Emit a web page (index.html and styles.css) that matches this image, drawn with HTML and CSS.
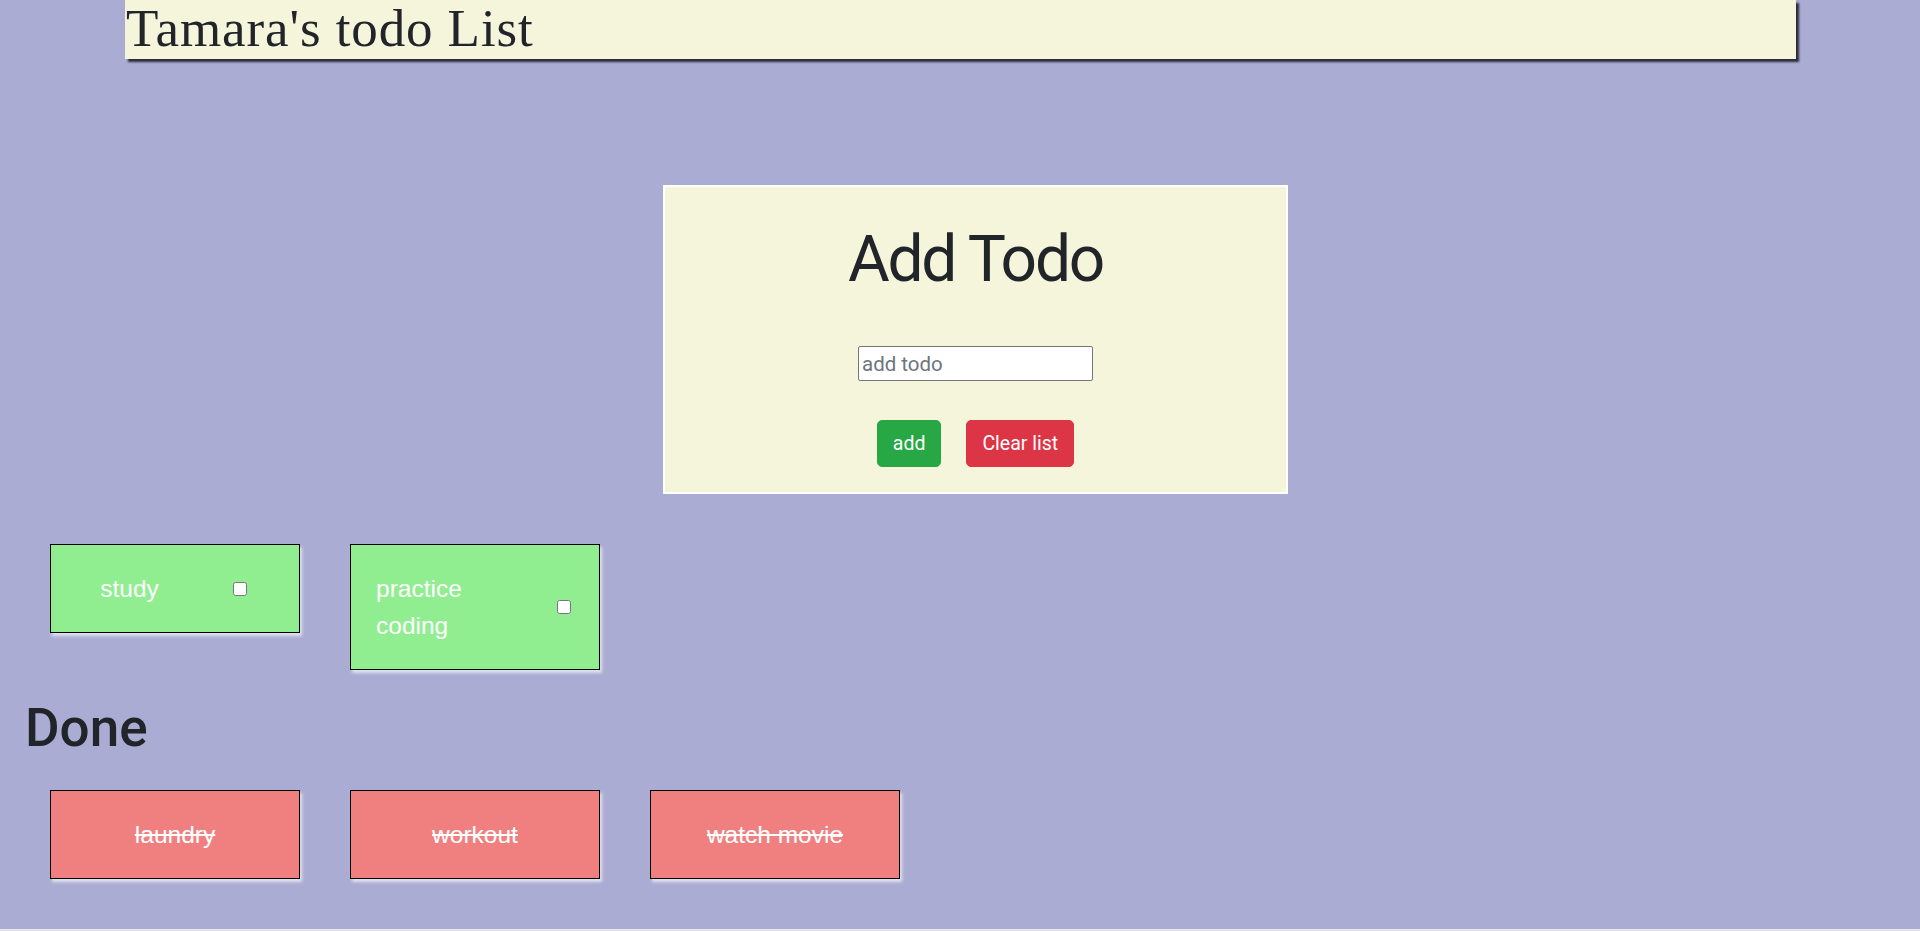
FILE: index.html
```html
<!DOCTYPE html>
<html>
<head>
<meta charset="utf-8">
<title>Tamara's todo List</title>
<link rel="stylesheet" href="styles.css">
</head>
<body>
<header class="title-bar"><h1 class="title">Tamara's todo List</h1></header>

<section class="add-panel">
  <h2 class="add-heading">Add Todo</h2>
  <input class="todo-input" type="text" placeholder="add todo">
  <div class="actions">
    <button class="btn btn-add">add</button>
    <button class="btn btn-clear">Clear list</button>
  </div>
</section>

<section class="todo-row">
  <div class="card card-open"><p class="card-text">study</p><input type="checkbox" class="check"></div>
  <div class="card card-open"><p class="card-text">practice coding</p><input type="checkbox" class="check"></div>
</section>

<h2 class="done-heading">Done</h2>

<section class="todo-row done-row">
  <div class="card card-done"><p class="card-text">laundry</p></div>
  <div class="card card-done"><p class="card-text">workout</p></div>
  <div class="card card-done"><p class="card-text">watch movie</p></div>
</section>
</body>
</html>
```

FILE: styles.css
```css
html {
  background: #e4e4e8;
}

body {
  margin: 0;
  height: 929px;
  background: #abacd3;
  color: #212529;
  font-family: Roboto, "Liberation Sans", sans-serif;
}

.title-bar {
  box-sizing: border-box;
  width: 1671px;
  height: 59px;
  margin-left: 125px;
  padding-left: 1px;
  background: #f5f5dc;
  box-shadow: 3px 3px 2px rgba(20, 20, 30, 0.85);
}

.title {
  margin: 0;
  font-family: "Liberation Serif", "Times New Roman", serif;
  font-weight: 400;
  font-size: 53px;
  line-height: 57px;
  letter-spacing: 0.9px;
  color: #212529;
}

.add-panel {
  box-sizing: border-box;
  width: 625px;
  height: 309px;
  margin: 126px 0 0 663px;
  padding: 34px 0 25px;
  background: #f5f5dc;
  border: 2px solid #ffffff;
  display: flex;
  flex-direction: column;
  align-items: center;
}

.add-heading {
  margin: 0;
  font-family: Roboto, "Liberation Sans", sans-serif;
  font-size: 64px;
  font-weight: 400;
  line-height: 78px;
  letter-spacing: -2.2px;
  color: #212529;
}

.todo-input {
  box-sizing: border-box;
  margin: 47px 0 0;
  width: 235px;
  height: 35px;
  padding: 0 3px;
  border: 1px solid #767676;
  border-radius: 2px;
  background: #ffffff;
  font-family: Roboto, "Liberation Sans", sans-serif;
  font-size: 20.5px;
  color: #212529;
}

.todo-input::placeholder {
  color: #6c757d;
}

.actions {
  display: flex;
  gap: 25px;
  margin-top: 39px;
}

.btn {
  box-sizing: border-box;
  height: 47px;
  margin: 0;
  padding: 0 15px;
  border: 1px solid transparent;
  border-radius: 5px;
  color: #ffffff;
  font-family: Roboto, "Liberation Sans", sans-serif;
  font-size: 19.5px;
  line-height: 1.5;
}

.btn-add {
  background: #28a745;
  border-color: #28a745;
}

.btn-clear {
  background: #dc3545;
  border-color: #dc3545;
}

.todo-row {
  display: flex;
  align-items: flex-start;
  gap: 50px;
  margin: 50px 0 0 50px;
}

.done-row {
  margin-top: 31px;
}

.card {
  box-sizing: border-box;
  width: 250px;
  padding: 25px;
  border: 1px solid #000000;
  display: flex;
  align-items: center;
  justify-content: center;
  gap: 71px;
  color: #ffffff;
  font-family: "Liberation Sans", Arial, sans-serif;
  font-size: 24.5px;
  line-height: 37px;
  box-shadow: 2px 3px 3px rgba(255, 255, 255, 0.65);
}

.card-open {
  background: #90ee90;
}

.card-done {
  background: #f08080;
}

.card-text {
  margin: 0;
}

.card-done .card-text {
  text-decoration: line-through;
  text-align: center;
}

.check {
  flex-shrink: 0;
  width: 14px;
  height: 14px;
  margin: 3px 3px 3px 3px;
}

.done-heading {
  margin: 28px 0 0 25px;
  font-family: Roboto, "Liberation Sans", sans-serif;
  font-size: 53px;
  font-weight: 500;
  line-height: 61px;
  color: #212529;
}
```
